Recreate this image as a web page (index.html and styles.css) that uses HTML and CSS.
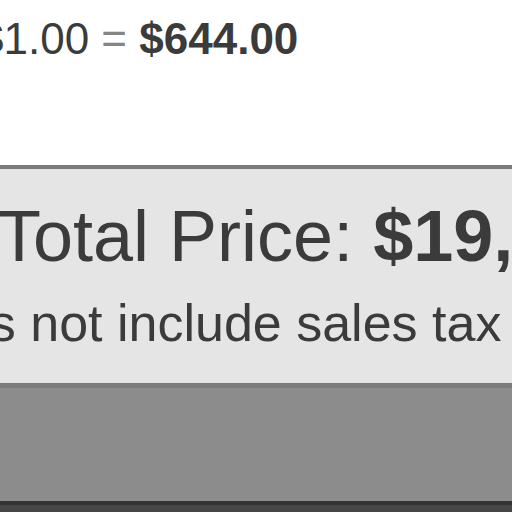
FILE: index.html
```html
<!DOCTYPE html>
<html>
<head>
<meta charset="utf-8">
<link rel="stylesheet" href="styles.css">
</head>
<body>
<div class="page">
  <div class="calc">
    <span class="unit">$1.00</span>
    <span class="eq">=</span>
    <span class="result">$644.00</span>
  </div>
  <div class="spacer"></div>
  <div class="total-box">
    <div class="total-line">Total Price: <span class="total-amount">$19,</span></div>
    <div class="tax-note">does not include sales tax</div>
  </div>
  <div class="action-bar"></div>
  <div class="footer"></div>
</div>
</body>
</html>
```

FILE: styles.css
```css
html, body {
  margin: 0;
  padding: 0;
  background: #ffffff;
}
body {
  width: 512px;
  height: 512px;
  overflow: hidden;
  font-family: "Liberation Sans", Arial, sans-serif;
  color: #3b3b3b;
}
.page {
  display: flex;
  flex-direction: column;
  width: 512px;
}
.calc {
  padding-top: 17px;
  margin-left: -21px;
  font-size: 44px;
  line-height: 44px;
  white-space: nowrap;
}
.eq {
  color: #858585;
}
.result {
  font-weight: bold;
}
.spacer {
  height: 104px;
}
.total-box {
  background: #e5e5e5;
  border-top: 4px solid #7b7b7b;
  border-bottom: 5px solid #7b7b7b;
  padding: 31px 0 34px;
  white-space: nowrap;
}
.total-line {
  font-size: 72px;
  line-height: 72px;
  margin-left: -3px;
}
.total-amount {
  font-weight: bold;
}
.tax-note {
  font-size: 52px;
  line-height: 52px;
  margin-top: 25px;
  margin-left: -97px;
}
.action-bar {
  height: 113px;
  background: #8c8c8c;
}
.footer {
  height: 11px;
  background: #464646;
  border-top: 4px solid #333333;
}
```
